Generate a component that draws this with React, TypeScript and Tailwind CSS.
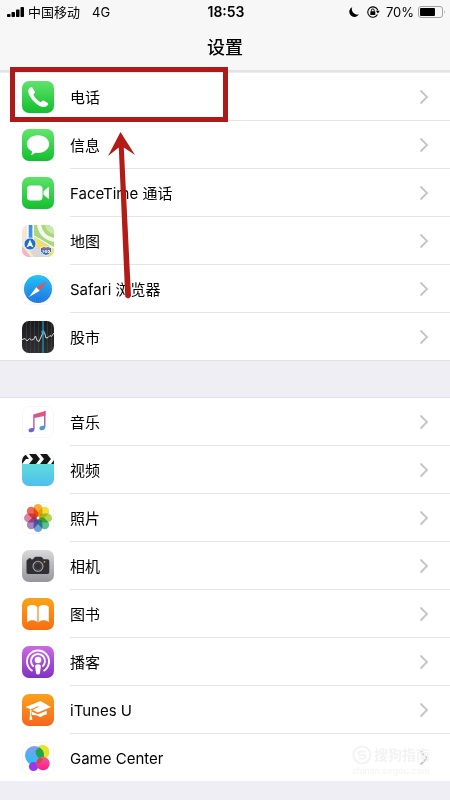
import type { ReactNode } from "react";

// ============================================
// Types
// ============================================

interface SettingItem {
  id: string;
  label: string;
  icon: ReactNode;
}

// ============================================
// App icons
// ============================================

function Tile({ children }: { children: ReactNode }) {
  return (
    <svg
      viewBox="0 0 32 32"
      className="size-8 shrink-0 overflow-hidden rounded-[7px]"
      aria-hidden="true"
    >
      {children}
    </svg>
  );
}

function Gradient({ id, from, to }: { id: string; from: string; to: string }) {
  return (
    <>
      <defs>
        <linearGradient id={id} x1="0" y1="0" x2="0" y2="1">
          <stop offset="0" stopColor={from} />
          <stop offset="1" stopColor={to} />
        </linearGradient>
      </defs>
      <rect width="32" height="32" fill={`url(#${id})`} />
    </>
  );
}

function WhiteTile() {
  return (
    <rect x=".5" y=".5" width="31" height="31" rx="6.5" fill="#fff" stroke="#f6f6f6" />
  );
}

const PhoneIcon = (
  <Tile>
    <Gradient id="phone" from="#5fe36c" to="#12bf2c" />
    <path
      d="M7 7.6C8.2 6.2 9.6 5.6 10.3 6.4L12.8 10.4C13.3 11.5 12.7 12 11.7 12.9C11.2 13.5 11.6 14.4 13 16.3C14.8 18.7 16.9 20.4 18.3 21.1C19 21.4 19.4 20.8 20 20.1C20.7 19.4 21.3 19.3 22.1 19.7L25.8 22C26.8 22.8 26 24 24.8 25.1C22.8 26.8 19.5 26.2 16 23.9C12.2 21.4 8.8 17.5 7 13.5C6 11.2 5.9 9.2 7 7.6Z"
      fill="#fff"
    />
  </Tile>
);

const MessagesIcon = (
  <Tile>
    <Gradient id="messages" from="#62e66c" to="#12bf2e" />
    <path
      d="M16 6.2c6.3 0 11.2 3.9 11.2 8.9S22.3 24 16 24c-1.1 0-2-.1-3-.3-1 1.200-2.600 2-4.300 2.200 .9-.9 1.500-2.100 1.500-3.300C6.900 21 4.800 18.300 4.800 15.100c0-5 4.900-8.900 11.200-8.900Z"
      fill="#fff"
    />
  </Tile>
);

const FaceTimeIcon = (
  <Tile>
    <Gradient id="facetime" from="#5de269" to="#14c02f" />
    <rect x="5" y="8.500" width="15.500" height="15" rx="3.500" fill="#fff" />
    <path d="M21.500 14.300L26 10.300Q27 9.700 27 11V21Q27 22.300 26 21.600L21.500 17.700Z" fill="#fff" />
  </Tile>
);

const MapsIcon = (
  <Tile>
    <rect width="32" height="32" fill="#f3ead6" />
    <path d="M12 0H32V22L25 21L12 12Z" fill="#a8d97f" />
    <path d="M23 0H32V9C27 8 24 5 23 0Z" fill="#c8e8a8" />
    <path d="M0 0H6V15H0Z" fill="#f5e6dc" />
    <path d="M0 21L9 32H0Z" fill="#f4b4c3" />
    <path d="M17 0C18.500 8 24 13.500 32 15" fill="none" stroke="#f6f7ef" strokeWidth="4" />
    <path d="M12 13L32 24V32H24L11 20Z" fill="#f5dc62" />
    <path d="M11 18L27 32H12L7 25Z" fill="#ddd6d3" />
    <path d="M12 11L32 23" stroke="#fff" strokeWidth="1.200" />
    <path d="M6.500 0H10.500V18H6.500Z" fill="#3d94e6" />
    <path d="M5.800 0V18M11.300 0V15" stroke="#fff" strokeWidth="1.200" />
    <circle cx="8" cy="19" r="6" fill="#1f6fc9" stroke="#fff" strokeWidth=".8" />
    <path d="M8 14.500L11.500 22.500L8 20.800L4.500 22.500Z" fill="#fff" />
    <path
      d="M18.500 22.500Q20.500 22.800 22 21.500L24 22.300L26 21.500Q27.500 22.800 29.500 22.500Q31 27 26.500 29.500L24 30.500L21.500 29.500Q17 27 18.500 22.500Z"
      fill="#2e73bf"
      stroke="#fff"
      strokeWidth=".8"
    />
    <path d="M20 23.800H28" stroke="#d95757" strokeWidth="1.200" />
    <path
      d="M20.500 27H22V25.800H20.500M23.300 27.500V25.500H24.700V27.500ZM26 25.500H27.500V27.500H26Z"
      fill="none"
      stroke="#fff"
      strokeWidth=".8"
    />
  </Tile>
);

const SafariIcon = (
  <Tile>
    <defs>
      <linearGradient id="safari" x1="0" y1="0" x2="0" y2="1">
        <stop offset="0" stopColor="#21c4f7" />
        <stop offset="1" stopColor="#2072df" />
      </linearGradient>
    </defs>
    <WhiteTile />
    <circle cx="16" cy="16" r="14" fill="url(#safari)" />
    <circle
      cx="16"
      cy="16"
      r="12"
      fill="none"
      stroke="#6fc2f5"
      strokeWidth="1"
      strokeDasharray=".4 1.700"
    />
    <path d="M25 8L14.300 14.300L17.700 17.700Z" fill="#e0535f" />
    <path d="M7 24L14.300 14.300L17.700 17.700Z" fill="#fff" />
  </Tile>
);

const StocksIcon = (
  <Tile>
    <Gradient id="stocks" from="#1b1b1d" to="#303033" />
    <path
      d="M4.500 0V32M8.500 0V32M12.500 0V32M16.500 0V32M25.500 0V32M29.500 0V32"
      stroke="#454548"
      strokeWidth=".6"
    />
    <path d="M21 0V32" stroke="#1b8fb5" strokeWidth="1.400" />
    <path
      d="M0 18.500L3 17.500L5 20L7.500 17.500L9.500 19L11.500 18.500L13.500 15L15 19.500L17 20.500L19 16L20.500 12.500L22.500 11.500L24 17L26 16.500L28 14.500L29.500 15.500L32 12"
      fill="none"
      stroke="#d8d8d8"
      strokeWidth="1"
      strokeLinejoin="round"
    />
    <circle cx="21" cy="11" r="1.800" fill="#2aa9d2" />
  </Tile>
);

const MusicIcon = (
  <Tile>
    <defs>
      <linearGradient id="music" x1=".6" y1="0" x2=".4" y2="1">
        <stop offset="0" stopColor="#f2506f" />
        <stop offset=".45" stopColor="#c55aa0" />
        <stop offset="1" stopColor="#6a62dd" />
      </linearGradient>
      <linearGradient id="musicStem" x1="0" y1="0" x2="0" y2="1">
        <stop offset="0" stopColor="#f2506f" />
        <stop offset=".5" stopColor="#9a65bf" />
        <stop offset="1" stopColor="#35a8dc" />
      </linearGradient>
    </defs>
    <WhiteTile />
    <path
      d="M11.200 8.400V22.100C8.500 21.500 6.500 22.700 6.500 24.300C6.500 25.700 7.700 26.500 9.200 26.300C11.300 26.100 12.600 24.800 12.600 22.500V12L23.500 9.700V5Z"
      fill="url(#music)"
    />
    <path
      d="M22 9V19.800C19.500 19.500 17.400 20.500 17.400 22.300C17.400 23.700 18.500 24.500 20 24.300C22.300 24 23.500 22.500 23.500 20.200V5.400Q23.500 4.700 22.700 4.900L22 5Z"
      fill="url(#musicStem)"
    />
  </Tile>
);

const VideosIcon = (
  <Tile>
    <Gradient id="videos" from="#66ead0" to="#4fbef0" />
    <rect width="32" height="10" fill="#fff" />
    <path d="M0 1H4L7 5H0ZM7 0H14L18 5H11ZM18 0H25L29 5H22ZM29 0H32V3Z" fill="#161616" />
    <path d="M0 5V10L4 5ZM11 5H18L14 10H7ZM22 5H29L25 10H18ZM32 6V10H29Z" fill="#161616" />
  </Tile>
);

const petals = [
  { color: "#f7a51f", angle: 0 },
  { color: "#efdc1d", angle: 45 },
  { color: "#a5cf43", angle: 90 },
  { color: "#47b988", angle: 135 },
  { color: "#6496d6", angle: 180 },
  { color: "#a177bb", angle: 225 },
  { color: "#d9759b", angle: 270 },
  { color: "#f0573f", angle: 315 },
];

const PhotosIcon = (
  <Tile>
    <WhiteTile />
    {petals.map((petal) => (
      <rect
        key={petal.angle}
        x="11.600"
        y="2"
        width="8.800"
        height="12.800"
        rx="4.400"
        fill={petal.color}
        transform={`rotate(${petal.angle} 16 16)`}
        className="opacity-90 mix-blend-multiply"
      />
    ))}
  </Tile>
);

const CameraIcon = (
  <Tile>
    <Gradient id="camera" from="#d9d9dc" to="#96969a" />
    <path
      d="M6.500 9.300V8.300H9V9.200H11L12.500 7.300Q13 6.700 14 6.700H18.500Q19.500 6.700 20 7.300L21.500 9.200H25.500Q27.300 9.200 27.300 11V22.300Q27.300 24 25.500 24H6.300Q4.500 24 4.500 22.300V11Q4.500 9.300 6.500 9.300Z"
      fill="#303033"
    />
    <circle cx="16" cy="16.300" r="5" fill="#303033" stroke="#aaaaad" strokeWidth="1.100" />
    <circle cx="16" cy="16.300" r="3.400" fill="none" stroke="#56565a" strokeWidth=".6" />
    <circle cx="22.500" cy="11.800" r=".9" fill="#d9a53a" />
  </Tile>
);

const BooksIcon = (
  <Tile>
    <Gradient id="books" from="#fba416" to="#f76d12" />
    <path
      d="M15.400 9.300C13.500 6.500 7.600 6.400 5.200 9V24.300C8.300 21.700 12.400 21.700 15.400 24.300ZM16.600 9.300C18.500 6.500 24.400 6.400 26.800 9V24.300C23.700 21.700 19.600 21.700 16.600 24.300Z"
      fill="#fff"
    />
  </Tile>
);

const PodcastsIcon = (
  <Tile>
    <Gradient id="podcasts" from="#cb6be5" to="#8032c0" />
    <path
      d="M10.500 25A11 11 0 1 1 21.500 25M11.700 20.500A7 7 0 1 1 20.300 20.500"
      fill="none"
      stroke="#fff"
      strokeWidth="1.900"
    />
    <circle cx="16" cy="14" r="3.300" fill="#fff" />
    <path d="M13.200 20.500Q13.200 18.300 16 18.300T18.800 20.500L18 27Q17.700 28.500 16 28.500T14 27Z" fill="#fff" />
  </Tile>
);

const ItunesUIcon = (
  <Tile>
    <Gradient id="itunesu" from="#fba31a" to="#f4661f" />
    <path d="M3.500 13L18.500 7L29 13L16 18.500L10.500 16L17 12.800L15.700 12.300L8.700 15.500Z" fill="#fff" />
    <path d="M9.500 17.500L16 20.300L24.500 16.700L25 20.200Q21.500 20.500 18.500 23.300Q15 20.500 9.800 21Z" fill="#fff" />
    <path d="M7.800 15.500L9.500 16.300L9 20.500L10.500 25.500L7.500 26.200L8 20Z" fill="#fff" />
  </Tile>
);

const GameCenterIcon = (
  <Tile>
    <defs>
      <linearGradient id="gcBlue" x1=".5" y1="0" x2=".4" y2="1">
        <stop offset="0" stopColor="#8799ee" />
        <stop offset="1" stopColor="#21c3f7" />
      </linearGradient>
      <linearGradient id="gcPink" x1="0" y1="0" x2="0" y2="1">
        <stop offset="0" stopColor="#f55b8c" />
        <stop offset="1" stopColor="#f81d8b" />
      </linearGradient>
    </defs>
    <WhiteTile />
    <circle cx="20.500" cy="10" r="7" fill="#e7e523" />
    <circle cx="12.500" cy="13.500" r="9.500" fill="url(#gcBlue)" />
    <path d="M13.700 9A7 7 0 0 0 20.500 17L21.400 16.900A9.500 9.500 0 0 0 17.600 5.500A7 7 0 0 0 13.700 9Z" fill="#21a548" />
    <circle cx="11.500" cy="24.500" r="4.600" fill="#9a39ec" />
    <circle cx="21" cy="21.500" r="6.700" fill="url(#gcPink)" />
    <path d="M14.300 21.500A6.700 6.700 0 0 1 18.300 15.400L21 17.500L18 21.500Z" fill="#dc4056" />
  </Tile>
);

// ============================================
// Data
// ============================================

const systemApps: SettingItem[] = [
  { id: "phone", label: "电话", icon: PhoneIcon },
  { id: "messages", label: "信息", icon: MessagesIcon },
  { id: "facetime", label: "FaceTime 通话", icon: FaceTimeIcon },
  { id: "maps", label: "地图", icon: MapsIcon },
  { id: "safari", label: "Safari 浏览器", icon: SafariIcon },
  { id: "stocks", label: "股市", icon: StocksIcon },
];

const mediaApps: SettingItem[] = [
  { id: "music", label: "音乐", icon: MusicIcon },
  { id: "videos", label: "视频", icon: VideosIcon },
  { id: "photos", label: "照片", icon: PhotosIcon },
  { id: "camera", label: "相机", icon: CameraIcon },
  { id: "books", label: "图书", icon: BooksIcon },
  { id: "podcasts", label: "播客", icon: PodcastsIcon },
  { id: "itunesu", label: "iTunes U", icon: ItunesUIcon },
  { id: "gamecenter", label: "Game Center", icon: GameCenterIcon },
];

// ============================================
// Status bar
// ============================================

function StatusBar() {
  return (
    <div className="grid grid-cols-[1fr_auto_1fr] items-center pt-0.5 pr-1 pl-1.5 text-[13px] leading-5">
      <div className="flex items-center">
        <svg viewBox="0 0 18 12" className="mr-1 h-3 w-[18px]" aria-hidden="true">
          <rect x="1" y="8" width="3.500" height="3" rx=".8" />
          <rect x="5.500" y="6" width="3.500" height="5" rx=".8" />
          <rect x="10" y="3.500" width="3.500" height="7.500" rx=".8" />
          <rect x="14.500" y="1" width="3.500" height="10" rx=".8" />
        </svg>
        <span>中国移动</span>
        <span className="ml-3">4G</span>
      </div>
      <span className="text-sm leading-5 font-semibold">18:53</span>
      <div className="flex items-center justify-end">
        <svg viewBox="0 0 12 12" className="mr-1.5 size-3" aria-hidden="true">
          <path d="M4.300 1A5.200 5.200 0 1 0 11 8.300A5.400 5.400 0 0 1 4.300 1Z" />
        </svg>
        <svg viewBox="0 0 14 14" className="mr-1.5 size-3.5" aria-hidden="true">
          <path
            d="M11.800 5.200A5.200 5.200 0 1 0 11.500 9.600"
            fill="none"
            stroke="black"
            strokeWidth="1.100"
          />
          <path d="M9.900 5.800H13.800L11.800 8.500Z" />
          <rect x="4.300" y="6.300" width="5" height="3.700" rx=".5" />
          <path d="M5.400 6.500V5.300A1.400 1.400 0 0 1 8.200 5.300V6.500" fill="none" stroke="black" />
        </svg>
        <span className="mr-1">70%</span>
        <svg viewBox="0 0 28 12" className="h-3 w-7" aria-hidden="true">
          <rect x=".5" y=".5" width="24" height="11" rx="2.500" fill="none" stroke="#a3a3a3" />
          <rect x="2" y="2" width="15" height="8" rx="1" />
          <path d="M26 4Q27.800 6 26 8Z" fill="#a3a3a3" />
        </svg>
      </div>
    </div>
  );
}

// ============================================
// Settings list
// ============================================

function SettingRow({ item, highlighted }: { item: SettingItem; highlighted: boolean }) {
  return (
    <li className="group relative h-12 last:h-[47px]">
      <a href={`#${item.id}`} className="flex h-full items-center pl-[22px]">
        {item.icon}
        <span className="ml-4 flex h-full flex-1 items-center justify-between border-b border-[#e4e4e6] pr-5 group-last:border-b-0">
          <span className="pt-0.5 text-[15px] leading-5">{item.label}</span>
          <svg viewBox="0 0 12 16" className="h-4 w-3" aria-hidden="true">
            <path d="M2.500 1.500L9 8L2.500 14.500" fill="none" stroke="#c4c4c8" strokeWidth="1.800" />
          </svg>
        </span>
      </a>
      {highlighted && <Callout />}
    </li>
  );
}

// Red frame over a row, with the arrow pointing up at it
function Callout() {
  return (
    <div className="pointer-events-none absolute -top-1.5 left-2.5 z-10 h-[55px] w-[218px] border-[5px] border-[#ad1a17]">
      <svg
        viewBox="0 0 30 168"
        className="absolute top-[60px] left-[92px] h-[168px] w-[30px]"
        aria-hidden="true"
      >
        <path
          d="M13.500 0L28 23L16.800 15.500L24 164Q21.500 168.500 18.200 164.500L11.800 15.500L1 24Z"
          fill="#b31b17"
        />
      </svg>
    </div>
  );
}

function SettingGroup({ items, highlightedId }: { items: SettingItem[]; highlightedId?: string }) {
  return (
    <ul className="bg-white">
      {items.map((item) => (
        <SettingRow key={item.id} item={item} highlighted={item.id === highlightedId} />
      ))}
    </ul>
  );
}

// Faint site mark over the end of the list
function Watermark() {
  return (
    <div className="pointer-events-none absolute right-5 bottom-1 flex flex-col items-center text-[#f3f3f3]">
      <div className="flex items-center gap-0.5">
        <svg viewBox="0 0 20 20" className="size-5" aria-hidden="true">
          <circle cx="10" cy="10" r="8.500" fill="none" stroke="currentColor" strokeWidth="2" />
          <path
            d="M13.500 6.500H9Q6.500 6.500 6.500 8.300T9 10H11Q13.500 10 13.500 11.800T11 13.500H6.500"
            fill="none"
            stroke="currentColor"
            strokeWidth="2"
          />
        </svg>
        <span className="text-sm leading-5 font-semibold">搜狗指南</span>
      </div>
      <span className="text-[9px] leading-3">zhinan.sogou.com</span>
    </div>
  );
}

// ============================================
// Main Component
// ============================================

export default function App() {
  return (
    <div className="min-h-screen bg-[#eeeef4] font-[Inter,'Noto_Sans_CJK_SC',sans-serif] text-black">
      <header className="border-b-2 border-[#e3e3e5] bg-[#f7f7f7]">
        <StatusBar />
        <h1 className="pt-3.5 pb-2.5 text-center text-lg leading-6 font-medium">设置</h1>
      </header>

      <main>
        <div className="h-px border-b border-[#ececee] bg-white" />
        <SettingGroup items={systemApps} highlightedId="phone" />
        <div className="h-[38px] border-y border-[#e0e0e6]" />
        <div className="relative">
          <SettingGroup items={mediaApps} />
          <Watermark />
        </div>
      </main>
    </div>
  );
}
